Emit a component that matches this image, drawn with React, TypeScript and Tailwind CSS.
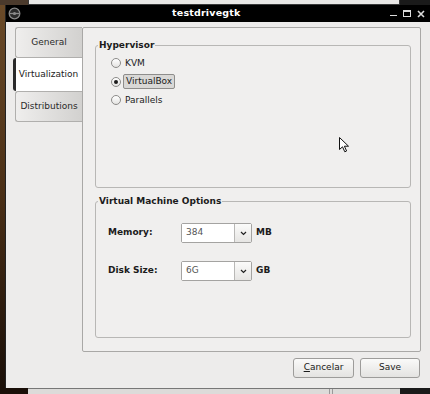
import React from "react";

const font = { fontFamily: '"DejaVu Sans", "Liberation Sans", sans-serif' };

function Radio({ label, checked, focused }: { label: string; checked?: boolean; focused?: boolean }) {
  return (
    <div className="flex h-[18.5px] items-center">
      <span className="flex h-[10px] w-[10px] items-center justify-center rounded-full border border-[#8c8b89] bg-gradient-to-b from-[#ffffff] to-[#e4e3e1]">
        {checked && <span className="h-[4px] w-[4px] rounded-full bg-[#1c1c1c]" />}
      </span>
      {focused ? (
        <span className="ml-[2px] rounded-[2px] border border-[#8e8d8b] bg-[#d9d8d6] px-[2px] leading-[13px]">
          {label}
        </span>
      ) : (
        <span className="ml-[4px]">{label}</span>
      )}
    </div>
  );
}

function Combo({ value, unit }: { value: string; unit: string }) {
  return (
    <div className="flex items-center">
      <div className="flex h-[20px] w-[71px] rounded-[2px] border border-[#a4a3a1]">
        <div className="flex flex-1 items-center bg-white pl-[4px] text-[#555]">{value}</div>
        <div className="flex w-[17px] items-center justify-center border-l border-[#b9b8b6] bg-gradient-to-b from-[#fbfbfa] to-[#e6e5e3]">
          <svg width="7" height="5" viewBox="0 0 7 5">
            <path d="M1 1 L3.5 3.5 L6 1" fill="none" stroke="#222" strokeWidth="1.2" />
          </svg>
        </div>
      </div>
      <span className="ml-[4px] font-bold">{unit}</span>
    </div>
  );
}

function Tab({ label, selected }: { label: string; selected?: boolean }) {
  if (selected) {
    return (
      <div className="-ml-[2px] -mr-[1px] flex h-[33px] items-center justify-center rounded-l-[3px] border-l-[3px] border-[#2a2a2a] bg-white pl-[1px] pr-[3px]">
        {label}
      </div>
    );
  }
  return (
    <div className="flex h-[31px] items-center justify-center rounded-l-[3px] border border-r-0 border-[#b0afad] bg-gradient-to-r from-[#efeeed] to-[#d2d1cf] text-[#2a2a2a]">
      {label}
    </div>
  );
}

export default function App() {
  return (
    <div className="relative flex h-[394px] w-[430px] flex-col overflow-hidden bg-[#1c120a] text-[9px] text-[#1b1b1b]" style={font}>
      {/* top edge of the window behind */}
      <div className="flex h-[5px] shrink-0">
        <div className="w-[28px] bg-[#4b3a2c]" />
        <div className="w-[372px] border-x border-b border-[#3a3a3a] bg-[#e9e8e6]" />
        <div className="flex-1 bg-[#1a1a1a]" />
      </div>

      <div className="flex min-h-0 flex-1">
        <div className="w-[5px] bg-gradient-to-b from-[#6a4a28] via-[#4a2f16] to-[#1a0f08]" />

        <div className="flex flex-1 flex-col border-l border-[#222]">
          {/* titlebar */}
          <div className="flex h-[17px] items-center bg-black text-white">
            <svg className="ml-[2px]" width="13" height="13" viewBox="0 0 13 13">
              <circle cx="6.5" cy="6.5" r="5.3" fill="#2a2a2a" stroke="#8a8a8a" strokeWidth="1.3" />
              <path d="M1.5 6.5 H11.5" stroke="#8a8a8a" strokeWidth="1.3" />
              <circle cx="6.5" cy="6.5" r="1.6" fill="#8a8a8a" />
            </svg>
            <div className="flex-1 pl-[151px] text-[9.5px] font-bold tracking-[0.2px]">testdrivegtk</div>
            <div className="flex items-center gap-[6px] pr-[5px] text-[#dcdcdc]">
              <span className="mt-[4px] h-[1.5px] w-[7px] bg-[#dcdcdc]" />
              <span className="h-[7px] w-[8px] border border-t-2 border-[#dcdcdc]" />
              <svg width="8" height="8" viewBox="0 0 8 8">
                <path d="M1 1 L7 7 M7 1 L1 7" stroke="#dcdcdc" strokeWidth="1.6" />
              </svg>
            </div>
          </div>

          {/* body */}
          <div className="flex flex-1 flex-col bg-[#edeceb] px-[9px] pb-[10px] pt-[5px]">
            <div className="flex h-[325px]">
              <div className="flex w-[67px] flex-col">
                <Tab label="General" />
                <Tab label="Virtualization" selected />
                <Tab label="Distributions" />
              </div>

              <div className="flex flex-1 flex-col gap-[8px] rounded-[2px] border border-[#a9a8a6] bg-[#f0efee] pb-[13px] pl-[12px] pr-[9px] pt-[12px]">
                <fieldset className="h-[148px] rounded-[3px] border border-[#b8b7b5] px-[15px]">
                  <legend className="-ml-[13px] px-[1px] text-[9px] font-bold leading-[11px]">Hypervisor</legend>
                  <div className="pt-[3px]">
                    <Radio label="KVM" />
                    <Radio label="VirtualBox" checked focused />
                    <Radio label="Parallels" />
                  </div>
                </fieldset>

                <fieldset className="h-[142px] rounded-[3px] border border-[#b8b7b5] pl-[12px]">
                  <legend className="-ml-[10px] px-[1px] text-[9px] font-bold leading-[11px]">Virtual Machine Options</legend>
                  <div className="flex flex-col gap-[18px] pt-[16px]">
                    <div className="flex items-center">
                      <span className="w-[73px] font-bold">Memory:</span>
                      <Combo value="384" unit="MB" />
                    </div>
                    <div className="flex items-center">
                      <span className="w-[73px] font-bold">Disk Size:</span>
                      <Combo value="6G" unit="GB" />
                    </div>
                  </div>
                </fieldset>
              </div>
            </div>

            <div className="mt-[6px] flex h-[20px] justify-end gap-[6px] pr-[1px]">
              <button className="w-[61px] rounded-[3px] border border-[#9d9c9a] bg-gradient-to-b from-[#fafaf9] to-[#e4e3e1]">
                <span className="underline">C</span>ancelar
              </button>
              <button className="w-[60px] rounded-[3px] border border-[#9d9c9a] bg-gradient-to-b from-[#fafaf9] to-[#e4e3e1]">
                Save
              </button>
            </div>
          </div>
        </div>
      </div>

      {/* bottom edge of the window behind */}
      <div className="flex h-[6px] shrink-0">
        <div className="w-[28px] bg-[#1a0f08]" />
        <div className="flex w-[372px] border-t border-[#777] bg-[#dcdbd9]">
          <div className="w-[302px] border-r border-[#999]" />
          <div className="w-[3px] border-r border-[#999]" />
        </div>
        <div className="flex-1 bg-[#1a1a1a]" />
      </div>

      {/* mouse pointer */}
      <svg className="absolute left-[339px] top-[137px]" width="11" height="16" viewBox="0 0 11 16">
        <path d="M0.5 0.5 L0.5 12.5 L3.5 9.8 L5.8 14.8 L7.6 14 L5.4 9.2 L9.5 9.2 Z" fill="#fff" stroke="#111" strokeWidth="1" strokeLinejoin="round" />
      </svg>
    </div>
  );
}
